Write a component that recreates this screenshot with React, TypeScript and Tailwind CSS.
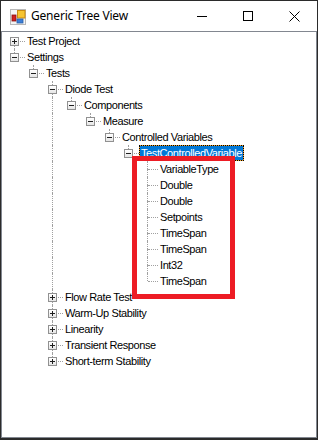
import React from "react";

type Node = {
  label: string;
  children?: Node[];
  expanded?: boolean;
  selected?: boolean;
};

const tree: Node[] = [
  { label: "Test Project", children: [{ label: "x" }], expanded: false },
  {
    label: "Settings",
    expanded: true,
    children: [
      {
        label: "Tests",
        expanded: true,
        children: [
          {
            label: "Diode Test",
            expanded: true,
            children: [
              {
                label: "Components",
                expanded: true,
                children: [
                  {
                    label: "Measure",
                    expanded: true,
                    children: [
                      {
                        label: "Controlled Variables",
                        expanded: true,
                        children: [
                          {
                            label: "TestControlledVariable",
                            expanded: true,
                            selected: true,
                            children: [
                              { label: "VariableType" },
                              { label: "Double" },
                              { label: "Double" },
                              { label: "Setpoints" },
                              { label: "TimeSpan" },
                              { label: "TimeSpan" },
                              { label: "Int32" },
                              { label: "TimeSpan" },
                            ],
                          },
                        ],
                      },
                    ],
                  },
                ],
              },
            ],
          },
          { label: "Flow Rate Test", children: [{ label: "x" }] },
          { label: "Warm-Up Stability", children: [{ label: "x" }] },
          { label: "Linearity", children: [{ label: "x" }] },
          { label: "Transient Response", children: [{ label: "x" }] },
          { label: "Short-term Stability", children: [{ label: "x" }] },
        ],
      },
    ],
  },
];

type Row = {
  node: Node;
  level: number;
  hasNext: boolean;
  isFirstRoot: boolean;
  ancestorsNext: boolean[];
};

function flatten(nodes: Node[], level: number, ancestorsNext: boolean[], out: Row[]) {
  nodes.forEach((n, i) => {
    const hasNext = i < nodes.length - 1;
    out.push({ node: n, level, hasNext, isFirstRoot: level === 0 && i === 0, ancestorsNext });
    if (n.children && n.expanded) {
      flatten(n.children, level + 1, [...ancestorsNext, hasNext], out);
    }
  });
  return out;
}

const rows = flatten(tree, 0, [], []);

function Expander({ open }: { open: boolean }) {
  return (
    <div className="absolute left-[5px] top-[4px] flex h-[9px] w-[9px] items-center justify-center border border-[#919191] bg-gradient-to-b from-white to-[#e6e6e6]">
      <div className="relative h-[5px] w-[5px]">
        <div className="absolute left-0 top-[2px] h-[1px] w-[5px] bg-[#1f1f1f]" />
        {!open && <div className="absolute left-[2px] top-0 h-[5px] w-[1px] bg-[#1f1f1f]" />}
      </div>
    </div>
  );
}

function TreeRow({ row }: { row: Row }) {
  const { node, hasNext, isFirstRoot, ancestorsNext } = row;
  const hasChildren = !!node.children;
  return (
    <div className="flex h-[16px] items-center">
      {ancestorsNext.map((next, i) => (
        <div key={i} className="relative h-full w-[19px] shrink-0">
          {next && <div className="absolute left-[9px] top-0 h-full border-l border-dotted border-[#a0a0a0]" />}
        </div>
      ))}
      <div className="relative h-full w-[19px] shrink-0">
        {!isFirstRoot && (
          <div className="absolute left-[9px] top-0 h-[8px] border-l border-dotted border-[#a0a0a0]" />
        )}
        {hasNext && (
          <div className="absolute left-[9px] top-[8px] h-[8px] border-l border-dotted border-[#a0a0a0]" />
        )}
        <div className="absolute left-[10px] top-[8px] w-[10px] border-t border-dotted border-[#a0a0a0]" />
        {hasChildren && <Expander open={!!node.expanded} />}
      </div>
      {node.selected ? (
        <span className="ml-[1px] flex h-[16px] items-center border border-dotted border-black bg-[#f0a028]">
          <span className="flex h-full items-center whitespace-nowrap bg-[#0078d7] px-[1px] text-white">
            {node.label}
          </span>
        </span>
      ) : (
        <span className="ml-[1px] whitespace-nowrap px-[2px] text-black">{node.label}</span>
      )}
    </div>
  );
}

function AppIcon() {
  return (
    <svg width="16" height="16" viewBox="0 0 16 16">
      <rect x="0.5" y="0.5" width="15" height="15" fill="#f4f4f4" stroke="#b8b8b8" />
      <rect x="2" y="6" width="4" height="6" fill="#d02020" stroke="#8a1010" strokeWidth="0.8" />
      <rect x="7.5" y="1.5" width="7.5" height="7.5" fill="#f6c431" stroke="#c98a10" />
      <rect x="7" y="10" width="6" height="4" fill="#3c7fd8" stroke="#2a5fa8" strokeWidth="0.8" />
    </svg>
  );
}

export default function App() {
  return (
    <div
      className="relative flex h-[440px] w-[318px] flex-col border border-b-2 border-[#2b2b2b] bg-white"
      style={{ fontFamily: '"Liberation Sans", Arial, sans-serif' }}
    >
      <div className="flex h-[30px] shrink-0 items-center bg-white">
        <div className="ml-[9px] mt-[1px] flex h-[16px] w-[16px] items-center">
          <AppIcon />
        </div>
        <span
          className="ml-[5px] text-[12px] tracking-[-0.2px] text-black"
          style={{ fontFamily: '"Noto Sans", "Open Sans", sans-serif' }}
        >
          Generic Tree View
        </span>
        <div className="flex-1" />
        <div className="flex h-full w-[46px] items-center justify-center">
          <div className="h-[1px] w-[10px] bg-black" />
        </div>
        <div className="flex h-full w-[46px] items-center justify-center">
          <div className="h-[10px] w-[10px] border border-black" />
        </div>
        <div className="flex h-full w-[46px] items-center justify-center">
          <svg width="11" height="11" viewBox="0 0 11 11">
            <path d="M0.5 0.5 L10.5 10.5 M10.5 0.5 L0.5 10.5" stroke="#000" strokeWidth="1" />
          </svg>
        </div>
      </div>
      <div className="flex-1 border border-[#828790] bg-white pl-[3px] pt-[1px] text-[11px] leading-none tracking-[-0.4px]">
        {rows.map((r, i) => (
          <TreeRow key={i} row={r} />
        ))}
      </div>
      <div className="pointer-events-none absolute left-[131px] top-[155px] h-[143px] w-[103px] border-[5px] border-[#ed1c24]" />
    </div>
  );
}
